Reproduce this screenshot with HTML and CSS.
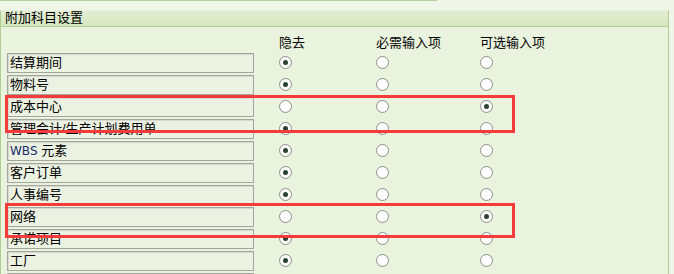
FILE: index.html
```html
<!DOCTYPE html>
<html>
<head>
<meta charset="utf-8">
<link rel="stylesheet" href="styles.css">
</head>
<body>
<div class="topline"></div>
<div class="panel">
  <div class="panel-header">附加科目设置</div>
  <div class="panel-body">
    <div class="grid">
      <div class="head"></div>
      <div class="head">隐去</div>
      <div class="head">必需输入项</div>
      <div class="head">可选输入项</div>

      <div class="cell"><div class="field">结算期间</div></div>
      <div class="cell"><span class="radio on"></span></div>
      <div class="cell"><span class="radio"></span></div>
      <div class="cell"><span class="radio"></span></div>

      <div class="cell"><div class="field">物料号</div></div>
      <div class="cell"><span class="radio on"></span></div>
      <div class="cell"><span class="radio"></span></div>
      <div class="cell"><span class="radio"></span></div>

      <div class="cell"><div class="field">成本中心</div></div>
      <div class="cell"><span class="radio"></span></div>
      <div class="cell"><span class="radio"></span></div>
      <div class="cell"><span class="radio on"></span></div>

      <div class="cell"><div class="field">管理会计/生产计划费用单</div></div>
      <div class="cell"><span class="radio on"></span></div>
      <div class="cell"><span class="radio"></span></div>
      <div class="cell"><span class="radio"></span></div>

      <div class="cell"><div class="field"><span class="latin">WBS</span> 元素</div></div>
      <div class="cell"><span class="radio on"></span></div>
      <div class="cell"><span class="radio"></span></div>
      <div class="cell"><span class="radio"></span></div>

      <div class="cell"><div class="field">客户订单</div></div>
      <div class="cell"><span class="radio on"></span></div>
      <div class="cell"><span class="radio"></span></div>
      <div class="cell"><span class="radio"></span></div>

      <div class="cell"><div class="field">人事编号</div></div>
      <div class="cell"><span class="radio on"></span></div>
      <div class="cell"><span class="radio"></span></div>
      <div class="cell"><span class="radio"></span></div>

      <div class="cell"><div class="field">网络</div></div>
      <div class="cell"><span class="radio"></span></div>
      <div class="cell"><span class="radio"></span></div>
      <div class="cell"><span class="radio on"></span></div>

      <div class="cell"><div class="field">承诺项目</div></div>
      <div class="cell"><span class="radio on"></span></div>
      <div class="cell"><span class="radio"></span></div>
      <div class="cell"><span class="radio"></span></div>

      <div class="cell"><div class="field">工厂</div></div>
      <div class="cell"><span class="radio on"></span></div>
      <div class="cell"><span class="radio"></span></div>
      <div class="cell"><span class="radio"></span></div>

      <div class="cell"><div class="field"></div></div>
      <div class="cell"><span class="radio on"></span></div>
      <div class="cell"><span class="radio"></span></div>
      <div class="cell"><span class="radio"></span></div>
    </div>
  </div>
</div>
<div class="mark mark1"></div>
<div class="mark mark2"></div>
</body>
</html>
```
FILE: styles.css
```css
html, body {
  margin: 0;
  padding: 0;
  height: 274px;
  overflow: hidden;
}
body {
  background: #eff5e8;
  font-family: "Liberation Sans", "Noto Sans CJK SC", sans-serif;
  font-size: 13px;
  color: #000;
  position: relative;
}
.topline {
  width: 437px;
  height: 1px;
  background: #b9d39c;
}
.panel {
  margin-top: 8px;
  width: 667px;
  border: 1px solid #b2cd93;
  border-bottom: none;
  border-radius: 3px 3px 0 0;
  background: #eaf3de;
}
.panel-header {
  height: 16px;
  line-height: 16px;
  padding-left: 4px;
  background: linear-gradient(#e4efd5, #d5e7bf);
  border-bottom: 1px solid #b2cd93;
  border-top: 1px solid #f3f8ec;
  margin-top: -1px;
}
.panel-body {
  padding: 9px 0 0 6px;
}
.grid {
  display: grid;
  grid-template-columns: 272px 97px 104px 1fr;
  grid-auto-rows: 22px;
  grid-template-rows: 17px;
}
.head {
  line-height: 14px;
  height: 17px;
  margin-left: 0;
}
.cell {
  display: flex;
  align-items: flex-start;
}
.field {
  box-sizing: border-box;
  width: 247px;
  height: 20px;
  line-height: 17px;
  padding-left: 2px;
  border: 1px solid #a4a59e;
  box-shadow: inset 1px 1px 0 #d6d8cf;
  background: #ecf2e2;
  white-space: nowrap;
  overflow: hidden;
}
.latin {
  font-family: "DejaVu Sans", sans-serif;
  font-size: 12px;
  color: #1a2a6a;
}
.radio {
  box-sizing: border-box;
  width: 13px;
  height: 13px;
  margin-top: 3px;
  margin-left: 0;
  border-radius: 50%;
  border: 1px solid #8f918c;
  background: radial-gradient(circle at 50% 45%, #ffffff 55%, #e9ebe6 100%);
  display: flex;
  align-items: center;
  justify-content: center;
}
.radio.on::after {
  content: "";
  width: 5px;
  height: 5px;
  border-radius: 50%;
  background: #2c4230;
}
.mark {
  position: absolute;
  left: 5px;
  width: 510px;
  box-sizing: border-box;
  border: 3px solid #f43b3b;
}
.mark1 {
  top: 95px;
  height: 38px;
}
.mark2 {
  top: 203px;
  height: 35px;
}
```
